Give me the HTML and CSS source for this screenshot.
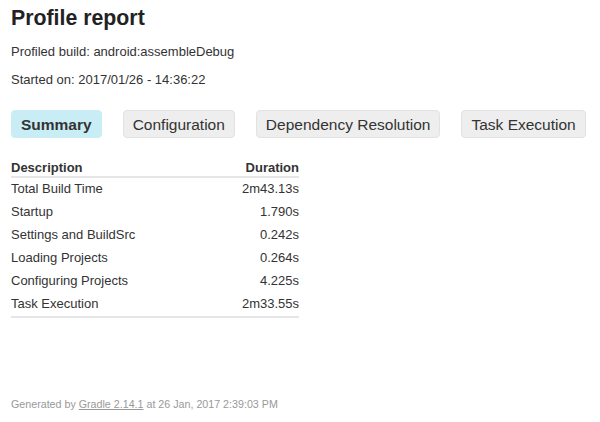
FILE: index.html
```html
<!DOCTYPE html>
<html lang="en">
<head>
  <meta charset="UTF-8" />
  <title>Profile report</title>
  <link rel="stylesheet" href="styles.css">
</head>
<body>
  <h1>Profile report</h1>
  <p class="meta first">Profiled build: android:assembleDebug</p>
  <p class="meta">Started on: 2017/01/26 - 14:36:22</p>

  <div class="tabs">
    <div class="tab active">Summary</div>
    <div class="tab">Configuration</div>
    <div class="tab">Dependency Resolution</div>
    <div class="tab">Task Execution</div>
  </div>

  <!-- Summary -->
  <table class="summary">
    <thead>
      <tr><th>Description</th><th class="num">Duration</th></tr>
    </thead>
    <tbody>
      <tr><td>Total Build Time</td><td class="num">2m43.13s</td></tr>
      <tr><td>Startup</td><td class="num">1.790s</td></tr>
      <tr><td>Settings and BuildSrc</td><td class="num">0.242s</td></tr>
      <tr><td>Loading Projects</td><td class="num">0.264s</td></tr>
      <tr><td>Configuring Projects</td><td class="num">4.225s</td></tr>
      <tr><td>Task Execution</td><td class="num">2m33.55s</td></tr>
    </tbody>
  </table>

  <div class="footer">Generated by <a href="#">Gradle 2.14.1</a> at 26 Jan, 2017 2:39:03 PM</div>
</body>
</html>
```

FILE: styles.css
```css
body {
  font-family: "Liberation Sans", Arial, sans-serif;
  color: #333;
  margin: 0;
  padding: 0 11px;
  background: #fff;
}
h1 {
  font-size: 21.3px;
  line-height: 24px;
  margin: 6px 0 0;
  color: #222;
}
.meta {
  font-size: 13px;
  line-height: 15px;
  margin: 13px 0 0;
}
.meta.first {
  margin-top: 14px;
}
.tabs {
  display: flex;
  gap: 21px;
  margin-top: 23px;
}
.tab {
  font-size: 15.5px;
  line-height: 18px;
  padding: 5px 9px 3px;
  background: #eee;
  border: 1px solid #e2e2e2;
  border-radius: 4px;
  color: #333;
  cursor: pointer;
}
.tab.active {
  background: #c9edf4;
  border-color: #c9edf4;
  font-weight: bold;
}
table.summary {
  width: 288px;
  margin-top: 19px;
  border-collapse: collapse;
  font-size: 13px;
  line-height: 15px;
}
table.summary th {
  text-align: left;
  padding: 3px 0 1px;
  border-bottom: 2px solid #e6e6e6;
}
table.summary td {
  padding: 3px 0 5px;
}
table.summary tbody tr:last-child td {
  border-bottom: 2px solid #e6e6e6;
}
.num {
  text-align: right;
}
table.summary th.num {
  text-align: right;
}
.footer {
  margin-top: 80px;
  font-size: 10.7px;
  line-height: 13px;
  color: #999;
}
.footer a {
  color: #999;
}
```
